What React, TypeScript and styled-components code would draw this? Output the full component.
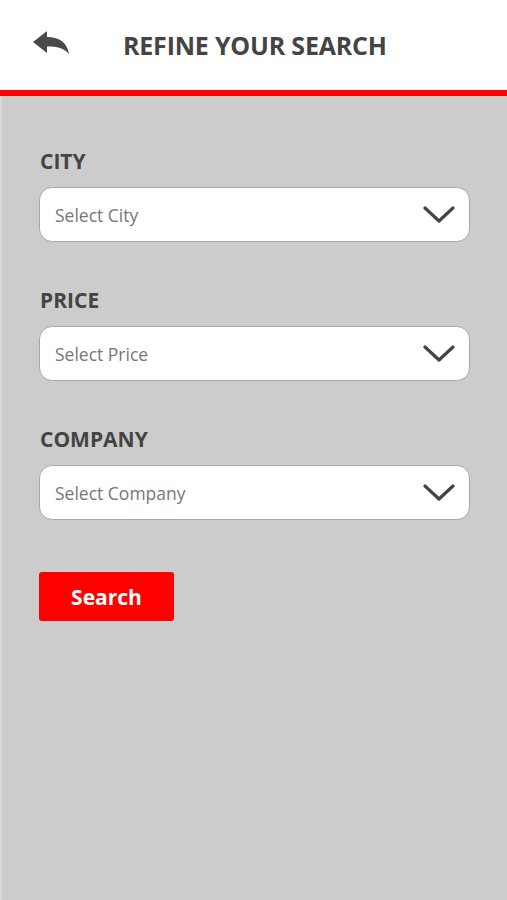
import React from 'react';
import styled, { createGlobalStyle } from 'styled-components';

const GlobalStyle = createGlobalStyle`
  html, body {
    margin: 0;
    padding: 0;
    background: #cccccc;
    font-family: "Open Sans", "Liberation Sans", sans-serif;
  }
`;

const Page = styled.div`
  min-height: 900px;
  background: #cccccc;
  border-left: 2px solid #d8d8d8;
  box-sizing: border-box;
`;

const Header = styled.div`
  height: 90px;
  background: #ffffff;
  border-bottom: 6px solid #ff0000;
  display: flex;
  align-items: center;
  padding-left: 33px;
  margin-left: -2px;
`;

const BackButton = styled.button`
  border: none;
  background: none;
  padding: 0;
  width: 36px;
  height: 24px;
  margin-top: -4px;
  display: flex;
  cursor: pointer;
`;

const Title = styled.h1`
  margin: 0 0 0 54px;
  font-size: 25px;
  font-weight: 700;
  color: #444444;
  letter-spacing: -0.2px;
`;

const Form = styled.div`
  padding: 51px 37px 0 37px;
  display: flex;
  flex-direction: column;
`;

const Field = styled.div`
  display: flex;
  flex-direction: column;
  margin-bottom: 44px;
`;

const Label = styled.label`
  font-size: 21px;
  font-weight: 700;
  color: #444444;
  line-height: 28px;
  margin-bottom: 12px;
  padding-left: 1px;
`;

const SelectBox = styled.div`
  height: 55px;
  background: #ffffff;
  border: 1px solid #a8a8a8;
  border-radius: 13px;
  box-sizing: border-box;
  display: flex;
  align-items: center;
  justify-content: space-between;
  padding: 0 14px 0 15px;
`;

const Placeholder = styled.span`
  font-size: 17.5px;
  color: #777777;
`;

const SearchButton = styled.button`
  width: 135px;
  height: 49px;
  margin-top: 8px;
  background: #ff0000;
  border: none;
  border-radius: 3px;
  color: #ffffff;
  font-family: "Open Sans", "Liberation Sans", sans-serif;
  font-size: 21px;
  font-weight: 700;
  cursor: pointer;
`;

const Chevron = () => (
  <svg width="32" height="18" viewBox="0 0 32 18">
    <path d="M2 2 L16 15 L30 2" fill="none" stroke="#444" strokeWidth="3.2" strokeLinecap="round" strokeLinejoin="round" />
  </svg>
);

const BackArrow = () => (
  <svg width="36" height="24" viewBox="0 0 36 24">
    <path d="M0 11 L14 0 V6 C26 6 34 11 36 23 C31 17 24 15.5 14 15.5 V22 Z" fill="#4a4a4a" />
  </svg>
);

const fields = [
  { label: 'CITY', placeholder: 'Select City' },
  { label: 'PRICE', placeholder: 'Select Price' },
  { label: 'COMPANY', placeholder: 'Select Company' },
];

const App: React.FC = () => {
  return (
    <Page>
      <GlobalStyle />
      <Header>
        <BackButton aria-label="Back">
          <BackArrow />
        </BackButton>
        <Title>REFINE YOUR SEARCH</Title>
      </Header>
      <Form>
        {fields.map((f) => (
          <Field key={f.label}>
            <Label>{f.label}</Label>
            <SelectBox>
              <Placeholder>{f.placeholder}</Placeholder>
              <Chevron />
            </SelectBox>
          </Field>
        ))}
        <SearchButton>Search</SearchButton>
      </Form>
    </Page>
  );
};

export default App;
